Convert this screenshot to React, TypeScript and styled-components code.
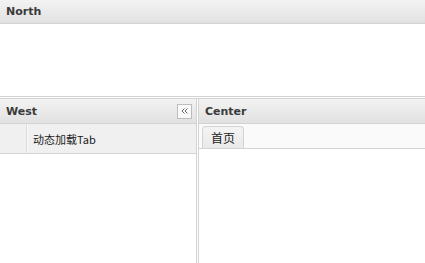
import React from "react";
import styled, { createGlobalStyle } from "styled-components";

const Global = createGlobalStyle`
  html, body { margin: 0; padding: 0; background: #fff; }
  body { font-family: "Liberation Sans", Arial, "Noto Sans CJK SC", sans-serif; font-size: 12px; color: #333; }
  #root { width: 425px; height: 263px; overflow: hidden; }
`;

const Page = styled.div`
  width: 425px;
  height: 263px;
  display: flex;
  flex-direction: column;
  overflow: hidden;
`;

const North = styled.div`
  height: 96px;
  display: flex;
  flex-direction: column;
  border-bottom: 1px solid #d3d3d3;
  flex-shrink: 0;
`;

const Header = styled.div`
  height: 23px;
  flex-shrink: 0;
  display: flex;
  align-items: center;
  justify-content: space-between;
  padding: 0 5px 0 6px;
  border-bottom: 1px solid #d3d3d3;
  background: linear-gradient(to bottom, #f3f3f3 0%, #e1e1e1 100%);
`;

const Title = styled.span`
  font-family: "DejaVu Sans", Verdana, sans-serif;
  font-weight: bold;
  font-size: 11px;
  color: #3a3a3a;
`;

const Body = styled.div`
  flex: 1;
  background: #fff;
`;

const Split = styled.div`
  height: 1px;
  background: #fff;
  flex-shrink: 0;
`;

const Main = styled.div`
  flex: 1;
  display: flex;
  border-top: 1px solid #d3d3d3;
  min-height: 0;
`;

const West = styled.div`
  width: 196px;
  display: flex;
  flex-direction: column;
  border-right: 1px solid #d3d3d3;
  flex-shrink: 0;
`;

const Gap = styled.div`
  width: 1px;
  background: #fff;
  flex-shrink: 0;
`;

const Center = styled.div`
  flex: 1;
  display: flex;
  flex-direction: column;
  border-left: 1px solid #d3d3d3;
`;

const PanelHeader = styled(Header)`
  height: 24px;
  padding-right: 4px;
`;

const Tool = styled.div`
  width: 13px;
  height: 13px;
  border: 1px solid #bdbdbd;
  background: #fafafa;
  display: flex;
  align-items: center;
  justify-content: center;
`;

const Row = styled.div`
  height: 29px;
  display: flex;
  align-items: center;
  background: #f0f0f0;
  border-bottom: 1px solid #d3d3d3;
`;

const RowNum = styled.div`
  width: 26px;
  height: 100%;
  border-right: 1px solid #dcdcdc;
  box-shadow: 1px 0 0 #fafafa;
`;

const RowText = styled.div`
  padding-left: 6px;
  font-size: 11px;
  color: #222;
  font-family: "Noto Sans CJK SC", sans-serif;
`;

const TabStrip = styled.div`
  height: 24px;
  display: flex;
  align-items: flex-end;
  padding-left: 3px;
  background: #fafafa;
  border-bottom: 1px solid #d3d3d3;
  flex-shrink: 0;
`;

const Tab = styled.div<{ $active?: boolean }>`
  height: 21px;
  padding: 0 8px;
  display: flex;
  align-items: center;
  border: 1px solid #d3d3d3;
  border-bottom: none;
  border-radius: 4px 4px 0 0;
  background: ${(p) => (p.$active ? "linear-gradient(to bottom, #f4f4f4, #e9e9e9)" : "#e8e8e8")};
  font-family: "Noto Sans CJK SC", sans-serif;
  font-size: 12px;
  color: #222;
`;

export default function App() {
  return (
    <Page>
      <Global />
      <North>
        <Header>
          <Title>North</Title>
        </Header>
        <Body />
      </North>
      <Split />
      <Main>
        <West>
          <PanelHeader>
            <Title>West</Title>
            <Tool>
              <svg width="9" height="8" viewBox="0 0 9 8">
                <path d="M4.5 1.5L2 4L4.5 6.5M7.5 1.5L5 4L7.5 6.5" stroke="#666" strokeWidth="1" fill="none" />
              </svg>
            </Tool>
          </PanelHeader>
          <Row>
            <RowNum />
            <RowText>动态加载Tab</RowText>
          </Row>
          <Body />
        </West>
        <Gap />
        <Center>
          <PanelHeader>
            <Title>Center</Title>
          </PanelHeader>
          <TabStrip>
            <Tab $active>首页</Tab>
          </TabStrip>
          <Body />
        </Center>
      </Main>
    </Page>
  );
}
